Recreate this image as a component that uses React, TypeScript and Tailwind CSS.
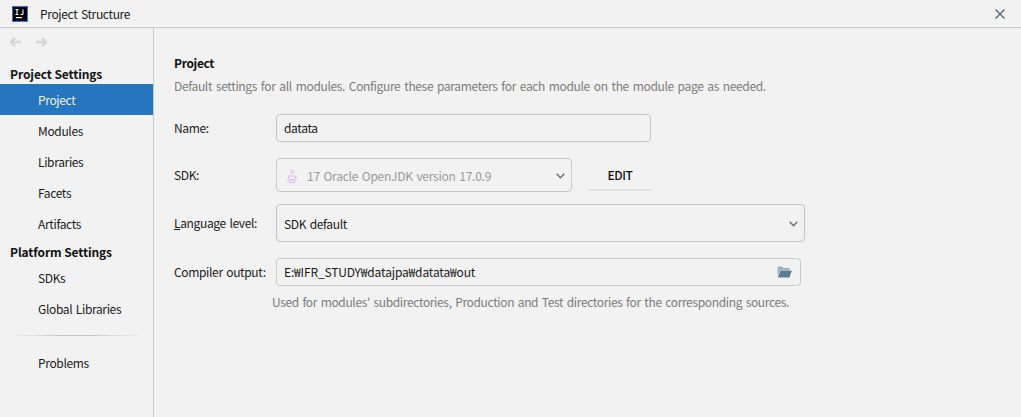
import React from "react";

function Chevron() {
  return (
    <svg width="9" height="6" viewBox="0 0 9 6" className="shrink-0">
      <path d="M.7.7 L4.500 4.700 L8.300.7" fill="none" stroke="#6e6e6e" strokeWidth="1.400" />
    </svg>
  );
}

function SideItem({ label, active }: { label: string; active?: boolean }) {
  return (
    <div className={"h-[31px] pl-[38px] flex items-center text-[12px] " + (active ? "bg-[#2675bf] text-[#f2f2f2]" : "text-[#1a1a1a]")}>
      {label}
    </div>
  );
}

function Row({ label, children, className }: { label: React.ReactNode; children: React.ReactNode; className?: string }) {
  return (
    <div className={"flex items-center " + (className ?? "")}>
      <div className="w-[102px] shrink-0 text-[12px] text-[#1a1a1a]">{label}</div>
      {children}
    </div>
  );
}

export default function App() {
  return (
    <div className="w-[1021px] h-[417px] bg-[#f2f2f2] flex flex-col overflow-hidden tracking-[-0.35px] [word-spacing:1.2px] font-['Noto_Sans_CJK_KR','Noto_Sans',sans-serif]">
      <div className="h-[28px] shrink-0 border-b border-[#c9c9c9] flex items-center pl-[12px] pr-[15px]">
        <svg width="16" height="16" viewBox="0 0 16 16" className="shrink-0">
          <rect x="0.5" y="0.5" width="15" height="15" fill="#000" stroke="#1e7bd6" />
          <rect x="4" y="11" width="6" height="1.2" fill="#fff" />
          <path d="M3.500 3.500h3M5 3.500v5M3.500 8.500h3M11 3.500v4.200c0 .9-1.600 1-2.400.3" fill="none" stroke="#fff" strokeWidth="1.100" />
        </svg>
        <div className="ml-[12px] text-[12px] text-[#1a1a1a]">Project Structure</div>
        <svg width="12" height="12" viewBox="0 0 12 12" className="ml-auto">
          <path d="M1.500 1.500 L10.500 10.500 M10.500 1.500 L1.500 10.500" stroke="#4f6572" strokeWidth="1.400" fill="none" />
        </svg>
      </div>
      <div className="flex flex-1 min-h-0">
        <div className="w-[154px] shrink-0 border-r border-[#c9c9c9] flex flex-col">
          <div className="h-[28px] flex items-center pl-[10px] gap-[15px]">
            <svg width="11" height="10" viewBox="0 0 11 10"><path d="M5 1 L1 5 L5 9 M1 5 H11" fill="none" stroke="#d6d6d6" strokeWidth="2.400" /></svg>
            <svg width="11" height="10" viewBox="0 0 11 10"><path d="M6 1 L10 5 L6 9 M10 5 H0" fill="none" stroke="#d6d6d6" strokeWidth="2.400" /></svg>
          </div>
          <div className="h-[28px] pl-[10px] flex items-end pb-[1px] text-[12px] font-bold text-[#111] tracking-[-0.1px] [word-spacing:0px]">Project Settings</div>
          <SideItem label="Project" active />
          <SideItem label="Modules" />
          <SideItem label="Libraries" />
          <SideItem label="Facets" />
          <SideItem label="Artifacts" />
          <div className="h-[23px] pt-[2px] pl-[10px] flex items-center text-[12px] font-bold text-[#111] tracking-[-0.1px] [word-spacing:0px]">Platform Settings</div>
          <SideItem label="SDKs" />
          <SideItem label="Global Libraries" />
          <div className="mx-[8px] mt-[11px] mb-[11px] h-px bg-gradient-to-r from-[#f2f2f2] via-[#bdbdbd] to-[#f2f2f2]" />
          <SideItem label="Problems" />
        </div>
        <div className="flex-1 pl-[20px] pt-[27px] flex flex-col">
          <div className="text-[12px] font-bold text-[#111] leading-[16px]">Project</div>
          <div className="mt-[7px] text-[12px] leading-[16px] text-[#7c7c7c] [word-spacing:1.5px]">Default settings for all modules. Configure these parameters for each module on the module page as needed.</div>
          <Row label="Name:" className="mt-[20px]">
            <div className="w-[375px] h-[28px] rounded-[4px] border border-[#c4c4c4] flex items-center px-[7px] text-[12px] text-[#1a1a1a]">datata</div>
          </Row>
          <Row label="SDK:" className="mt-[16px]">
            <div className="w-[296px] h-[34px] rounded-[4px] border border-[#c9c9c9] flex items-center pl-[9px] pr-[6px] pt-[1px] text-[12px] text-[#9a9a9a] tracking-[-0.25px]">
              <svg width="12" height="16" viewBox="0 0 14 18" className="shrink-0">
                <path d="M7 1c1 2-2 3-1 5M9 3c1 2-2 3-1 4M3 9h7.500v2.500c0 1-1 1.500-2 1.500H5c-1 0-2-.5-2-1.500zM10.500 9.500c2 0 2 2-.5 2.500M1 14.500h11M3 16.500h8" fill="none" stroke="#dcbdf0" strokeWidth="1.200" />
              </svg>
              <span className="ml-[9px]">17 Oracle OpenJDK version 17.0.9</span>
              <div className="ml-auto flex"><Chevron /></div>
            </div>
            <div className="ml-[15px] w-[66px] h-[31px] mt-[1px] rounded-b-[4px] border-b-2 border-[#e3e3e3] flex items-center justify-center text-[12px] font-medium text-[#111]">EDIT</div>
          </Row>
          <Row label={<span><span className="underline">L</span>anguage level:</span>} className="mt-[12px]">
            <div className="w-[529px] h-[38px] rounded-[4px] border border-[#c4c4c4] flex items-center pl-[7px] pr-[6px] pt-[1px] text-[12px] text-[#1a1a1a]">
              <span>SDK default</span>
              <div className="ml-auto flex"><Chevron /></div>
            </div>
          </Row>
          <Row label="Compiler output:" className="mt-[16px]">
            <div className="w-[525px] h-[28px] rounded-[4px] border border-[#c9c9c9] flex items-center pl-[7px] pr-[8px] text-[12px] text-[#1a1a1a]">
              <span className="tracking-[-0.15px]">E:₩IFR_STUDY₩datajpa₩datata₩out</span>
              <svg width="15" height="12" viewBox="0 0 15 12" className="ml-auto shrink-0">
                <path d="M0.500 1.500C0.500 1 1 .5 1.500 .5H5L6.500 2H12.500V4H3.500L.5 10z" fill="#9fb3bf" />
                <path d="M3.500 4.500H14.800L12.500 11.500H.8z" fill="#5f7d8f" />
              </svg>
            </div>
          </Row>
          <div className="mt-[8px] ml-[98px] text-[12px] leading-[16px] text-[#7c7c7c]">Used for modules' subdirectories, Production and Test directories for the corresponding sources.</div>
        </div>
      </div>
    </div>
  );
}
